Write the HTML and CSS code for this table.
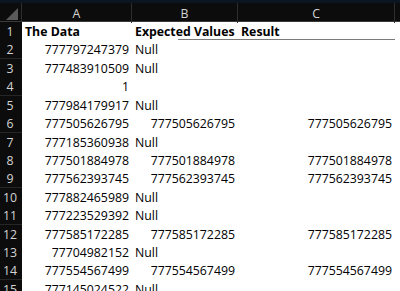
FILE: index.html
```html
<!DOCTYPE html>
<html>
<head>
<meta charset="utf-8">
<link rel="stylesheet" href="styles.css">
</head>
<body>
<div class="sheet">
  <div class="colhead">
    <div class="corner"></div>
    <div class="col">A</div>
    <div class="col">B</div>
    <div class="col">C</div>
    <div class="col last"></div>
  </div>
  <div class="row first">
    <div class="rh">1</div>
    <div class="c b">The Data</div>
    <div class="c b">Expected Values</div>
    <div class="c b">Result</div>
    <div class="c"></div>
    <div class="hline"></div>
  </div>
  <div class="row"><div class="rh">2</div><div class="c r">777797247379</div><div class="c">Null</div><div class="c"></div><div class="c"></div></div>
  <div class="row"><div class="rh">3</div><div class="c r">777483910509</div><div class="c">Null</div><div class="c"></div><div class="c"></div></div>
  <div class="row"><div class="rh">4</div><div class="c r">1</div><div class="c"></div><div class="c"></div><div class="c"></div></div>
  <div class="row"><div class="rh">5</div><div class="c r">777984179917</div><div class="c">Null</div><div class="c"></div><div class="c"></div></div>
  <div class="row"><div class="rh">6</div><div class="c r">777505626795</div><div class="c r">777505626795</div><div class="c r">777505626795</div><div class="c"></div></div>
  <div class="row"><div class="rh">7</div><div class="c r">777185360938</div><div class="c">Null</div><div class="c"></div><div class="c"></div></div>
  <div class="row"><div class="rh">8</div><div class="c r">777501884978</div><div class="c r">777501884978</div><div class="c r">777501884978</div><div class="c"></div></div>
  <div class="row"><div class="rh">9</div><div class="c r">777562393745</div><div class="c r">777562393745</div><div class="c r">777562393745</div><div class="c"></div></div>
  <div class="row"><div class="rh">10</div><div class="c r">777882465989</div><div class="c">Null</div><div class="c"></div><div class="c"></div></div>
  <div class="row"><div class="rh">11</div><div class="c r">777223529392</div><div class="c">Null</div><div class="c"></div><div class="c"></div></div>
  <div class="row"><div class="rh">12</div><div class="c r">777585172285</div><div class="c r">777585172285</div><div class="c r">777585172285</div><div class="c"></div></div>
  <div class="row"><div class="rh">13</div><div class="c r">77704982152</div><div class="c">Null</div><div class="c"></div><div class="c"></div></div>
  <div class="row"><div class="rh">14</div><div class="c r">777554567499</div><div class="c r">777554567499</div><div class="c r">777554567499</div><div class="c"></div></div>
  <div class="row"><div class="rh">15</div><div class="c r">777145024522</div><div class="c">Null</div><div class="c"></div><div class="c"></div></div>
</div>
</body>
</html>
```
FILE: styles.css
```css
html, body {
  margin: 0;
  padding: 0;
  background: #ffffff;
  overflow: hidden;
}
.sheet {
  width: 400px;
  height: 291px;
  overflow: hidden;
  font-family: "Open Sans", "Noto Sans", sans-serif;
  font-size: 12.3px;
  color: #000000;
}
.colhead, .row {
  display: grid;
  grid-template-columns: 22px 110px 106px 157px 5px;
}
.colhead {
  height: 22px;
  background: #0c0c0c;
  border-top: 3px solid #0c1522;
  box-sizing: border-box;
  border-bottom: 1px solid #3a3a3a;
}
.corner {
  position: relative;
  border-right: 1px solid #2e2e2e;
}
.corner::after {
  content: "";
  position: absolute;
  right: 3px;
  bottom: 3px;
  width: 12px;
  height: 12px;
  background: #5a5a5a;
  clip-path: polygon(100% 0, 100% 100%, 0 100%);
}
.col {
  color: #d4d4d4;
  text-align: center;
  line-height: 18px;
  padding-top: 2px;
  border-right: 1px solid #2e2e2e;
}
.col.last {
  border-right: 0;
}
.row {
  height: 18.43px;
  position: relative;
}
.rh {
  background: #0c0c0c;
  color: #d4d4d4;
  text-align: center;
  padding-right: 2px;
  padding-top: 2px;
  line-height: 16px;
  border-bottom: 1px solid #262626;
  box-sizing: border-box;
}
.c {
  padding: 2px 3px 0;
  line-height: 16px;
  white-space: nowrap;
  overflow: visible;
}
.c.r {
  text-align: right;
}
.c.b {
  font-weight: 700;
}
.hline {
  position: absolute;
  left: 178px;
  right: 5px;
  bottom: 0;
  height: 1px;
  background: #7a7a7a;
}
```
